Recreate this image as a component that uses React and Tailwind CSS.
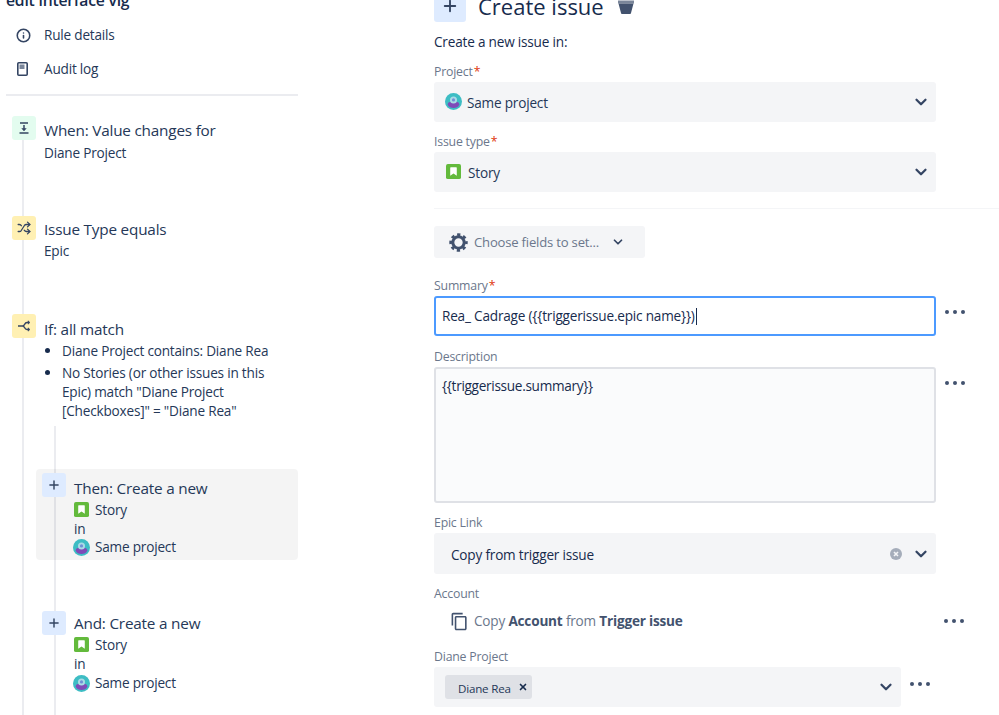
import React from "react";
import { Info, ChevronDown, Shuffle, Plus, X } from "lucide-react";
import { MdOutlineContentCopy } from "react-icons/md";

const Story = () => (
  <svg width="15" height="15" viewBox="0 0 16 16" className="shrink-0">
    <rect width="16" height="16" rx="2" fill="#63ba3c" />
    <path d="M5 3.5h6a.5.5 0 0 1 .5.5v8.5L8 10l-3.500 2.500V4a.5.5 0 0 1 .5-.5z" fill="#fff" />
  </svg>
);

const Avatar = () => (
  <svg width="17" height="17" viewBox="0 0 16 16" className="shrink-0">
    <circle cx="8" cy="8" r="8" fill="#3dbdc4" />
    <path d="M2.500 11c0-2 1.500-3 5.500-3s5.500 1 5.500 3c-1 2-3 3-5.500 3s-4.500-1-5.500-3z" fill="#7f4bb8" />
    <circle cx="8" cy="6.500" r="3.300" fill="#a9dbe6" />
    <circle cx="8" cy="6.500" r="1.500" fill="#6f8fd6" />
  </svg>
);

const Chevron = () => <ChevronDown size={18} strokeWidth={3} className="text-[#344563] shrink-0" />;

const Dots = () => (
  <svg width="20" height="6" viewBox="0 0 20 6" className="shrink-0">
    <circle cx="2" cy="3" r="2" fill="#42526e" />
    <circle cx="10" cy="3" r="2" fill="#42526e" />
    <circle cx="18" cy="3" r="2" fill="#42526e" />
  </svg>
);

const WhenIcon = () => (
  <svg width="14" height="14" viewBox="0 0 14 14" fill="none" stroke="#344563" strokeWidth="1.500">
    <path d="M3 2h8M2.500 12h9" />
    <path d="M7 4v5" />
    <path d="M4.800 7.500h4.400L7 10z" fill="#344563" strokeWidth="0.500" />
  </svg>
);

const BranchIcon = () => (
  <svg width="14" height="14" viewBox="0 0 14 14" fill="none" stroke="#344563" strokeWidth="1.500">
    <path d="M1 7h4.500c1 0 1.500-.5 2-1.500S8.500 3.500 10 3.500h2M5.500 7c1 0 1.500.5 2 1.500s1 2 2.500 2h2" />
    <path d="M11 1.800v3.400l2-1.700zM11 8.800v3.400l2-1.700z" fill="#344563" strokeWidth="0.500" />
  </svg>
);

const AuditIcon = () => (
  <svg width="11" height="14" viewBox="0 0 11 14" className="shrink-0">
    <rect x="0.800" y="0.800" width="9.400" height="12.400" rx="1" fill="none" stroke="#344563" strokeWidth="1.600" />
    <rect x="2.500" y="2.500" width="5" height="4.500" fill="#7a869a" />
  </svg>
);

const Gear = () => (
  <svg width="19" height="19" viewBox="0 0 20 20" fill="none" stroke="#42526e" className="shrink-0">
    <circle cx="10" cy="10" r="6" strokeWidth="3.200" />
    <circle cx="10" cy="10" r="8.200" strokeWidth="3" strokeDasharray="3.400 3.040" strokeDashoffset="1.700" />
  </svg>
);

const IconBox = ({ bg, children, className = "" }) => (
  <div className={`flex h-6 w-6 shrink-0 items-center justify-center rounded-[3px] ${bg} ${className}`}>{children}</div>
);

const Field = ({ label, required, children, className = "" }) => (
  <div className={className}>
    <div className="h-[20px] text-[12.300px] leading-[19px] font-medium text-[#6b778c]">
      {label}
      {required && <span className="ml-[1px] text-[#de350b]">*</span>}
    </div>
    {children}
  </div>
);

const SelectBox = ({ children, right, className = "" }) => (
  <div className={`flex items-center justify-between rounded-[3px] bg-[#f4f5f7] pr-[6px] ${className}`}>
    <div className="flex items-center gap-[5px] text-[#253858]">{children}</div>
    <div className="flex items-center gap-[6px]">
      {right}
      <Chevron />
    </div>
  </div>
);

const CreateStep = ({ title, pad, inClass }) => (
  <div className="flex gap-2 pl-[6px]">
    <IconBox bg="bg-[#deebff]" className="mt-[4px]">
      <Plus size={14} strokeWidth={2.500} className="text-[#344563]" />
    </IconBox>
    <div className={pad}>
      <div className="text-[15.300px] leading-[22px]">{title}</div>
      <div className="flex h-[21px] items-center gap-[6px]"><Story /><span className="pt-[1px]">Story</span></div>
      <div className={inClass}>in</div>
      <div className="flex h-[20px] items-center gap-[5px] -ml-[1px]"><Avatar />Same project</div>
    </div>
  </div>
);

export default function App() {
  return (
    <div className="flex h-[715px] w-[999px] overflow-hidden bg-white text-[13.600px] text-[#253858] [font-family:'Open_Sans','Noto_Sans',sans-serif] tracking-[-0.2px]">
      <aside className="ml-[6px] flex h-[715px] w-[292px] shrink-0 flex-col">
        <div className="-mt-[10px] text-[15.700px] leading-[20px] font-semibold text-[#172b4d]">edit interface vig</div>
        <div className="mt-[15px] flex h-5 items-center gap-[13px] pl-[10px]">
          <Info size={15} strokeWidth={2.500} className="text-[#344563]" />
          Rule details
        </div>
        <div className="mt-[14px] flex h-5 items-center gap-[16px] pl-[11px]">
          <AuditIcon />
          Audit log
        </div>
        <div className="mt-[15px] h-[2px] shrink-0 bg-[#ebecf0]" />
        <div className="ml-[16px] mt-[20px] flex-1 border-l-[2px] border-[#ebecf0]">
          <div className="flex h-[100px] gap-2 -ml-[12px]">
            <IconBox bg="bg-[#e3fcef]"><WhenIcon /></IconBox>
            <div>
              <div className="pt-[3px] text-[15.300px] leading-[22px]">When: Value changes for</div>
              <div className="mt-[2px] leading-[20px]">Diane Project</div>
            </div>
          </div>
          <div className="flex h-[98px] gap-2 -ml-[12px]">
            <IconBox bg="bg-[#fff0b3]"><Shuffle size={14} strokeWidth={2.200} className="text-[#344563]" /></IconBox>
            <div>
              <div className="pt-[2px] text-[15.300px] leading-[22px]">Issue Type equals</div>
              <div className="mt-[1px] leading-[20px]">Epic</div>
            </div>
          </div>
          <div className="flex gap-2 -ml-[12px]">
            <IconBox bg="bg-[#fff0b3]"><BranchIcon /></IconBox>
            <div>
              <div className="pt-[4px] text-[15.300px] leading-[22px]">If: all match</div>
              <ul className="mt-[1px] w-[232px] list-disc pl-[18px] leading-[19px] marker:text-[#172b4d]">
                <li className="mb-[3px]">Diane Project contains: Diane Rea</li>
                <li>No Stories (or other issues in this Epic) match "Diane Project [Checkboxes]" = "Diane Rea"</li>
              </ul>
            </div>
          </div>
          <div className="ml-[30px] mt-[6px] h-[400px] border-l-[2px] border-[#ebecf0] pt-[43px]">
            <div className="-ml-[20px] h-[91px] rounded-[4px] bg-[#0000000b]">
              <CreateStep title="Then: Create a new" pad="pt-[8px]" inClass="h-[17px] leading-[17px]" />
            </div>
            <div className="-ml-[20px] mt-[47px]">
              <CreateStep title="And: Create a new" pad="pt-[5px]" inClass="h-[18px] leading-[18px]" />
            </div>
          </div>
        </div>
      </aside>

      <main className="ml-[136px] flex min-w-0 flex-1 flex-col">
        <div className="-mt-[10px] flex h-[32px] items-center">
          <div className="flex h-[32px] w-[32px] items-center justify-center rounded-[3px] bg-[#deebff]">
            <Plus size={18} strokeWidth={2.500} className="text-[#344563]" />
          </div>
          <div className="ml-3 text-[22px] leading-[32px] text-[#172b4d] tracking-normal">Create issue</div>
          <svg width="16" height="24" viewBox="0 0 16 24" className="ml-[14px] -mt-[9px]">
            <path d="M0 10.500h16v3H0z" fill="#7a869a" />
            <path d="M0.500 13.500h15L13 23a1 1 0 0 1-1 1H4a1 1 0 0 1-1-1z" fill="#42526e" />
          </svg>
        </div>
        <div className="mt-[10px] h-5 leading-5 text-[#172b4d]">Create a new issue in:</div>
        <Field label="Project" required className="mt-[10px]">
          <SelectBox className="mr-[63px] h-[40px] pl-[11px]"><Avatar /><span className="pt-[2px]">Same project</span></SelectBox>
        </Field>
        <Field label="Issue type" required className="mt-[10px]">
          <SelectBox className="mr-[63px] h-[40px] pl-[12px]"><Story /><span className="ml-[2px] pt-[3px]">Story</span></SelectBox>
        </Field>
        <div className="mt-[16px] h-[1px] bg-[#f4f5f7]" />
        <div className="mt-[17px] flex h-[32px] w-[211px] items-center rounded-[3px] bg-[#f4f5f7] pl-[15px] text-[13.100px] text-[#6b778c]">
          <Gear />
          <span className="ml-[6px] pt-[2px]">Choose fields to set...</span>
          <ChevronDown size={14} strokeWidth={3} className="ml-[12px] text-[#344563]" />
        </div>
        <Field label="Summary" required className="mt-[18px]">
          <div className="flex items-center">
            <div className="flex h-[40px] w-[502px] items-center rounded-[3px] border-2 border-[#4c9aff] bg-white pl-[6px] pt-[1px] text-[#172b4d]">
              Rea_ Cadrage ({"{{"}triggerissue.epic name{"}}"})<span className="ml-[1px] h-[17px] w-[1px] bg-[#172b4d]" />
            </div>
            <div className="ml-[9px] -mt-[8px] flex"><Dots /></div>
          </div>
        </Field>
        <Field label="Description" className="mt-[11px]">
          <div className="flex items-start">
            <div className="h-[136px] w-[502px] rounded-[3px] border-2 border-[#dfe1e6] bg-[#fafbfc] pl-[6px] pt-[7px] leading-5 tracking-[-0.3px] text-[#172b4d]">
              {"{{"}triggerissue.summary{"}}"}
            </div>
            <div className="ml-[9px] mt-[13px] flex"><Dots /></div>
          </div>
        </Field>
        <Field label="Epic Link" className="mt-[10px]">
          <SelectBox
            className="mr-[63px] h-[41px] pl-[17px]"
            right={
              <svg width="12" height="12" viewBox="0 0 12 12" className="mr-[4px]">
                <circle cx="6" cy="6" r="6" fill="#a5adba" />
                <path d="M4 4l4 4M8 4l-4 4" stroke="#f4f5f7" strokeWidth="1.600" />
              </svg>
            }
          >
            <span className="pt-[3px] text-[#172b4d]">Copy from trigger issue</span>
          </SelectBox>
        </Field>
        <Field label="Account" className="mt-[10px]">
          <div className="mt-[7px] flex h-5 items-center pr-[35px]">
            <MdOutlineContentCopy size={19} className="ml-[16px] text-[#42526e]" />
            <span className="ml-[5px] text-[#6b778c]">
              Copy <b className="font-bold text-[#42526e]">Account</b> from <b className="font-bold text-[#42526e]">Trigger issue</b>
            </span>
            <div className="ml-auto flex"><Dots /></div>
          </div>
        </Field>
        <Field label="Diane Project" className="mt-[16px]">
          <div className="flex items-center">
            <div className="flex h-[40px] w-[467px] items-center justify-between rounded-[3px] bg-[#f4f5f7] pl-[11px] pr-[6px]">
              <div className="flex h-[24px] w-[87px] items-center rounded-[3px] bg-[#dfe1e6] pl-[13px] text-[11.600px] text-[#253858]">
                <span className="pt-[3px]">Diane Rea</span>
                <X size={10} strokeWidth={4} className="ml-[7px] text-[#172b4d]" />
              </div>
              <Chevron />
            </div>
            <div className="ml-[9px] -mt-[6px] flex"><Dots /></div>
          </div>
        </Field>
      </main>
    </div>
  );
}
